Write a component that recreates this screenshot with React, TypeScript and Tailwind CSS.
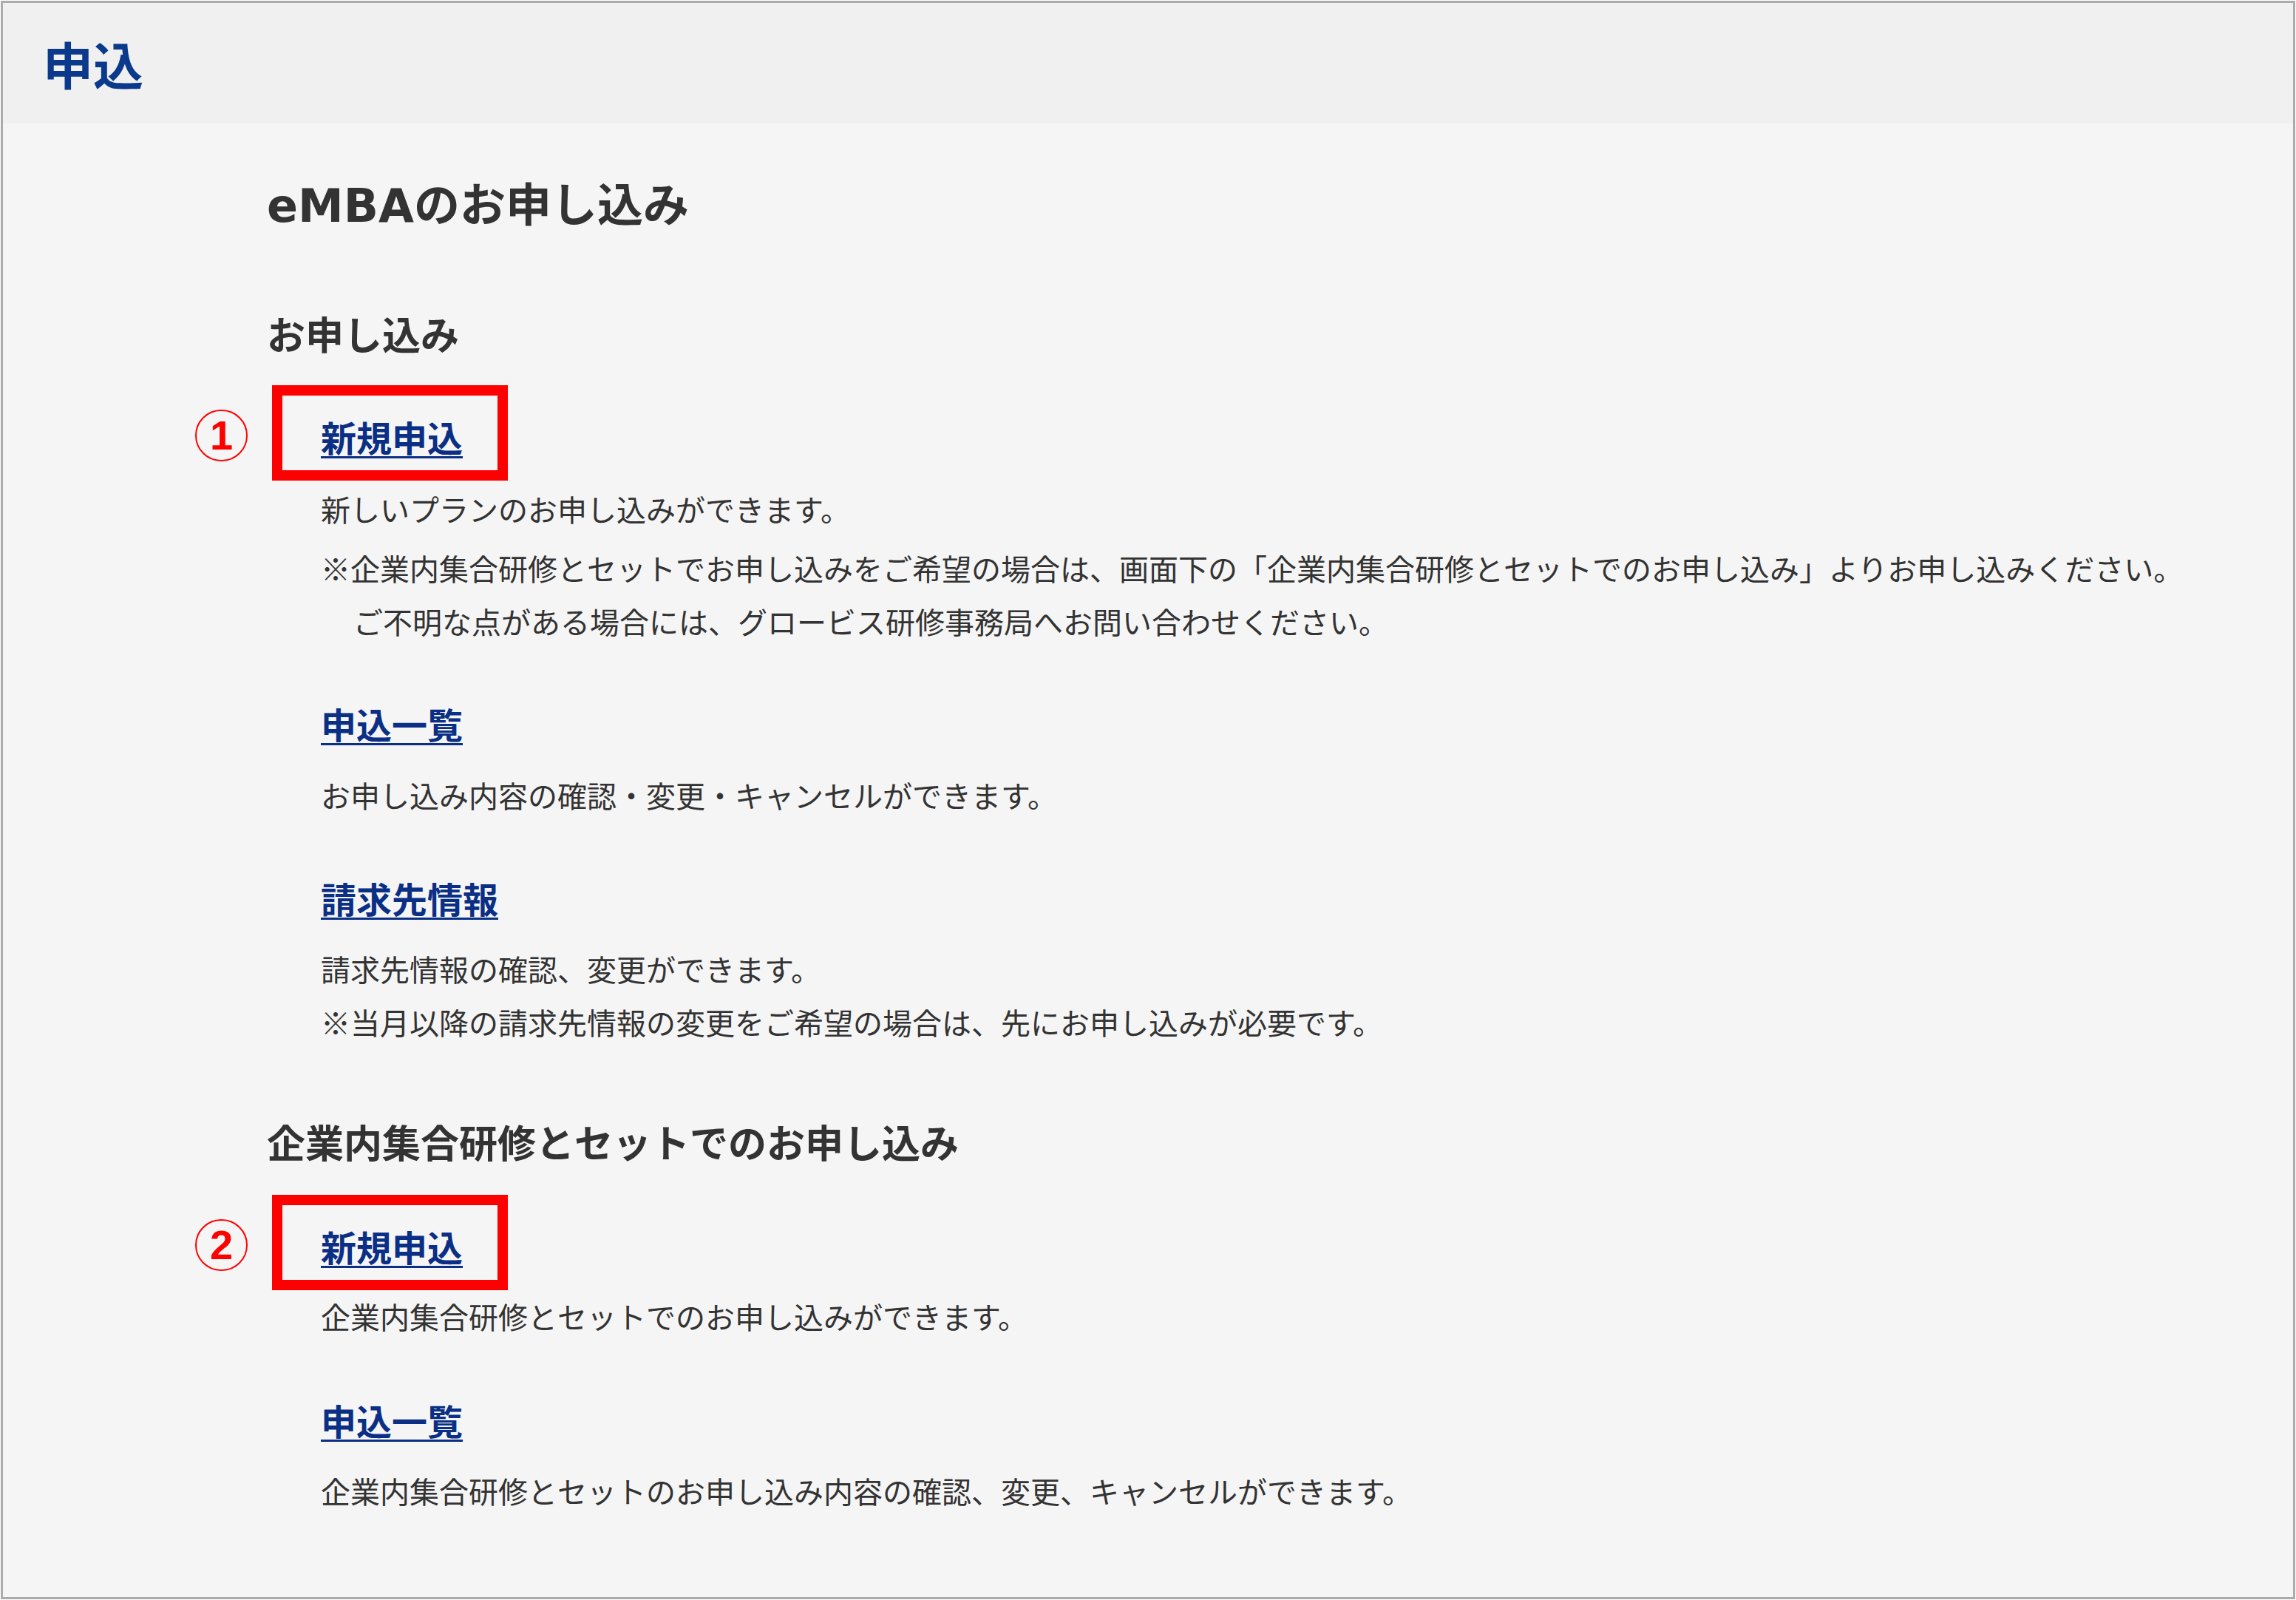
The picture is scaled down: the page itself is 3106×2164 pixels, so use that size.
import React from "react";

const CJK = '"Noto Sans CJK JP", "Noto Sans", sans-serif';
const TITLE = '"DejaVu Sans", "Noto Sans CJK JP", sans-serif';

function Marker({ n }: { n: string }) {
  return (
    <>
      <div className="absolute left-[-66px] top-[-37px] w-[319px] h-[129px] border-[14px] border-[#ff0000]" />
      <div
        className="absolute left-[-170px] top-[-4px] w-[71px] h-[70px] rounded-full border-2 border-[#ff0000] flex items-center justify-center text-[#ff0000] font-bold text-[56px] leading-none"
        style={{ fontFamily: '"Liberation Sans", sans-serif' }}
      >
        {n}
      </div>
    </>
  );
}

function LinkItem({ text, mt, marker }: { text: string; mt: string; marker?: string }) {
  return (
    <div className={`relative ml-[76px] h-[64px] ${mt}`}>
      <a
        href="#"
        className="text-[48px] leading-[64px] font-bold text-[#0a2f85] underline decoration-[3px] underline-offset-[6px]"
      >
        {text}
      </a>
      {marker ? <Marker n={marker} /> : null}
    </div>
  );
}

function Body({ lines, mt }: { lines: string[]; mt: string }) {
  return (
    <div className={`ml-[76px] text-[40px] leading-[72px] text-[#333333] whitespace-nowrap ${mt}`}>
      {lines.map((l, i) => (
        <div key={i} className={l.startsWith("　") ? "pl-[44px]" : ""}>
          {l.replace(/^　/, "")}
        </div>
      ))}
    </div>
  );
}

export default function App() {
  return (
    <div className="w-[3106px] h-[2164px] bg-white p-px" style={{ fontFamily: CJK }}>
      <div className="w-full h-full border-[3px] border-[#ababab] bg-[#f5f5f5] flex flex-col">
        <header className="h-[163px] bg-[#f0f0f0] flex items-center pl-[54px] shrink-0">
          <h1 className="text-[68px] leading-none font-bold text-[#0b3a8c]">申込</h1>
        </header>
        <main className="pl-[354px] flex flex-col">
          <h2
            className="mt-[72px] ml-[3px] text-[62px] leading-[80px] font-bold text-[#333333]"
            style={{ fontFamily: TITLE }}
          >
            eMBAのお申し込み
          </h2>

          <h3 className="mt-[96px] ml-[3px] text-[52px] leading-[72px] font-bold text-[#333333]">お申し込み</h3>

          <LinkItem text="新規申込" mt="mt-[71px]" marker="1" />
          <Body mt="mt-[30px]" lines={["新しいプランのお申し込みができます。"]} />
          <Body
            mt="mt-[8px]"
            lines={[
              "※企業内集合研修とセットでお申し込みをご希望の場合は、画面下の「企業内集合研修とセットでのお申し込み」よりお申し込みください。",
              "　ご不明な点がある場合には、グロービス研修事務局へお問い合わせください。",
            ]}
          />

          <LinkItem text="申込一覧" mt="mt-[70px]" />
          <Body mt="mt-[29px]" lines={["お申し込み内容の確認・変更・キャンセルができます。"]} />

          <LinkItem text="請求先情報" mt="mt-[71px]" />
          <Body
            mt="mt-[28px]"
            lines={["請求先情報の確認、変更ができます。", "※当月以降の請求先情報の変更をご希望の場合は、先にお申し込みが必要です。"]}
          />

          <h3 className="mt-[90px] ml-[3px] text-[52px] leading-[72px] font-bold text-[#333333]">
            企業内集合研修とセットでのお申し込み
          </h3>

          <LinkItem text="新規申込" mt="mt-[73px]" marker="2" />
          <Body mt="mt-[27px]" lines={["企業内集合研修とセットでのお申し込みができます。"]} />

          <LinkItem text="申込一覧" mt="mt-[72px]" />
          <Body
            mt="mt-[28px]"
            lines={["企業内集合研修とセットのお申し込み内容の確認、変更、キャンセルができます。"]}
          />
        </main>
      </div>
    </div>
  );
}
